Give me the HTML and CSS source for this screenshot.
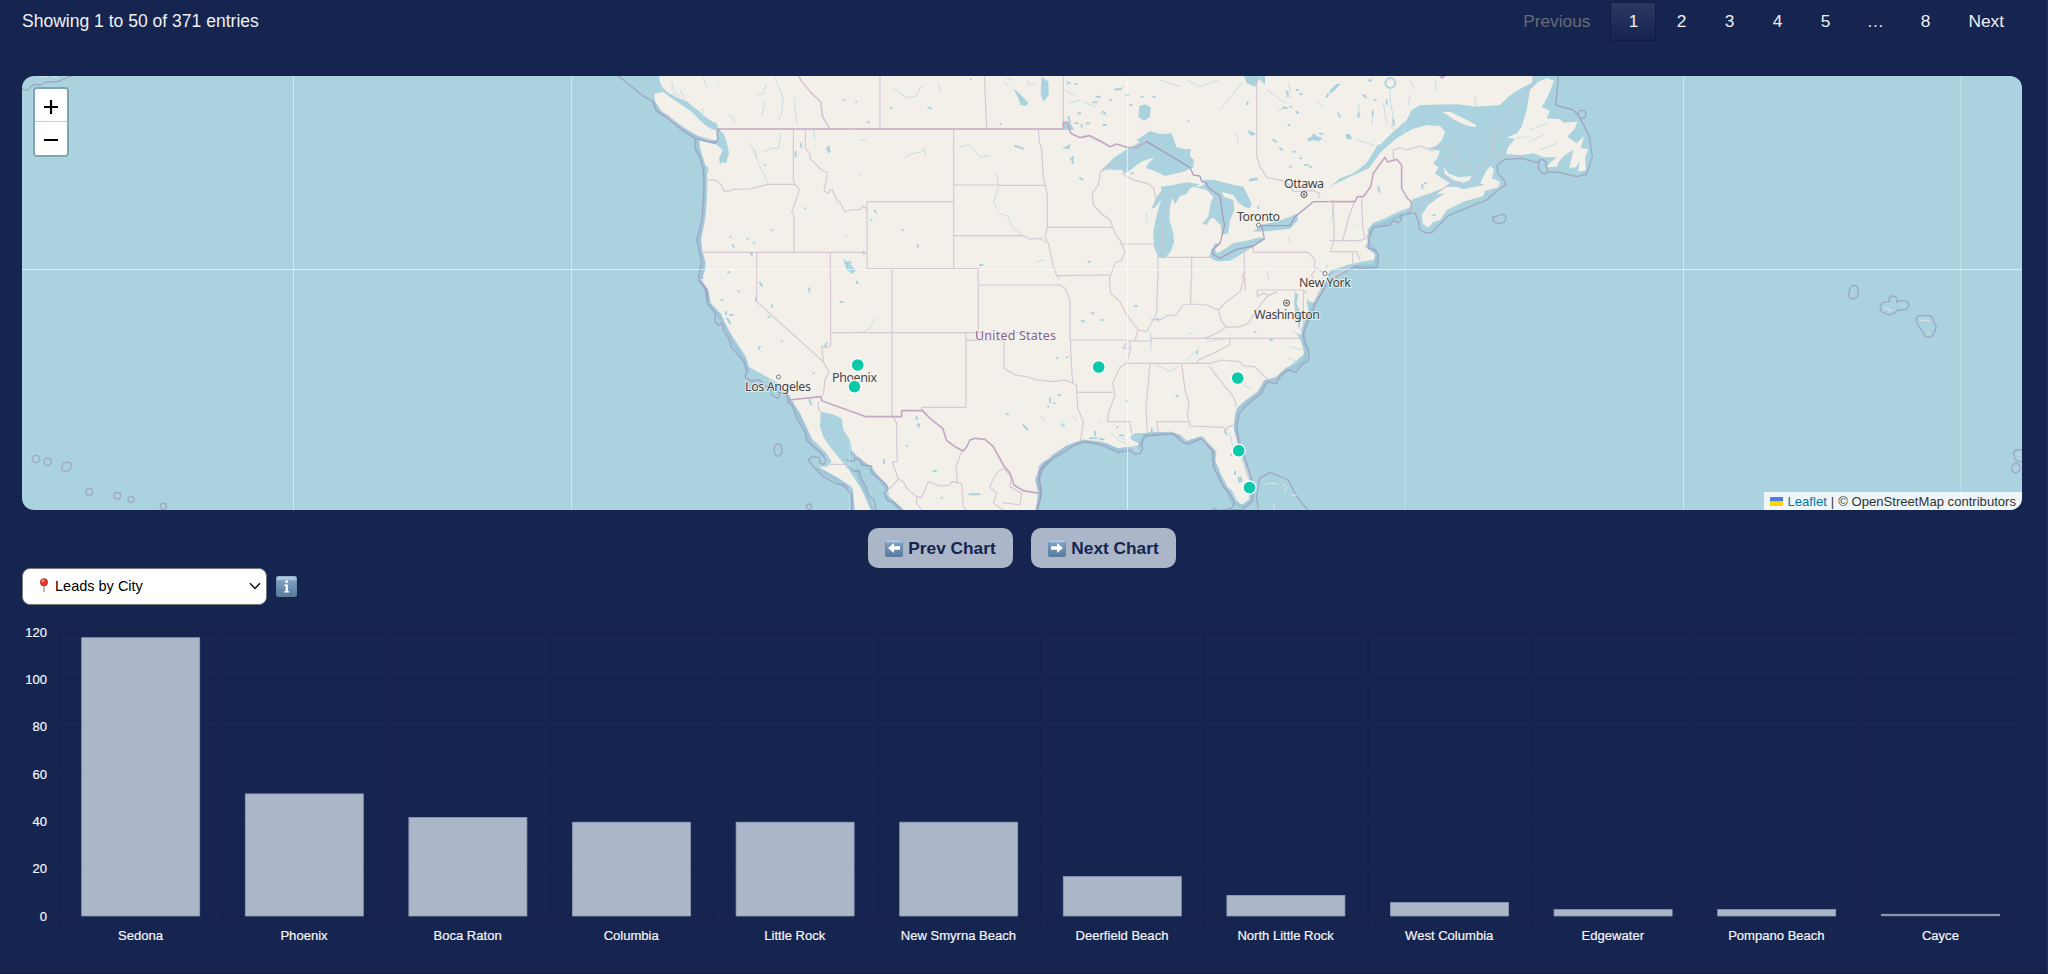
FILE: index.html
```html
<!DOCTYPE html>
<html lang="en">
<head>
<meta charset="utf-8">
<title>Leads</title>
<link rel="stylesheet" href="styles.css">
</head>
<body>
<header class="table-footer">
  <div class="info">Showing 1 to 50 of 371 entries</div>
  <nav class="pager">
    <a class="page word disabled">Previous</a><a class="page current">1</a><a class="page">2</a><a class="page">3</a><a class="page">4</a><a class="page">5</a><span class="page dots">…</span><a class="page">8</a><a class="page word">Next</a>
  </nav>
</header>

<section class="map">
  <svg class="tiles" viewBox="22 76 2000 434">
    <!-- north-west -->
    <g transform="translate(600 70) scale(.33333)">
      <path class="land" d="M178 0L178 30 185 48 200 65 225 80 262 95 285 115 312 138 345 160 356 178 368 188 378 215 386 250 378 272 360 281 357 266 368 240 350 224 298 212 302 240 312 275 320 300 318 330 320 380 316 430 308 480 303 510 306 545 316 575 316 600 308 620 322 650 330 694H1204V0Z"/>
      <path class="land" d="M162 72L190 66 215 85 245 105 275 125 300 150 335 168 352 187 350 210 330 214 300 202 260 180 215 150 185 125 166 95Z"/>
      <path class="shelf" d="M160 98L172 122 205 142 245 174 290 202 345 216M290 210L291 235 306 270 316 310 317 350 314 400 310 455 298 505 302 545 311 575 302 620 317 645 327 690"/>
      <path class="lake" d="M730 566L740 575 755 572 752 585 768 600 758 612 740 600ZM280 112L300 125 320 150 350 160 356 178 340 180 315 165 290 140ZM350 180L370 190 380 215 387 250 378 280 372 278 375 240 360 215ZM681 230L688 225 692 245 685 250Z"/>
      <path class="river" d="M195 70l20 8 8-8 8 18 25 10M215 35l6 25 18 20M240 60l16 30M262 95l0 20 15 5M300 150l10-20-5-15M310 20l10 30M500 40l-10 30-15 5M495 95l-10 45M525 25l25 60-5 45-8 20M583 85l5 60 5 15M385 135l15 10 3 15M350 40l6 10M445 218l20 25 5 20M490 245l25-10 20 0 8-45M460 240l20 50 25 50M880 55l40 28 30-5 10-25 10-5M1015 40l5 28M915 262l15-10 30-5 12-12 5 22M1080 230l25-5 20 18 15 18 28-5M1190 310l5 40-15 50 20 25M640 180l5 25M780 310l5 10M780 210l18 3M730 505l12-8M600 215l5 22"/>
      <path class="dots" d="M615 415h1M391 500h1M398 525l3 5M442 506h1M461 518h1M453 550l3 5M515 481h1M494 286h1M733 90h1M768 95h1M804 157h3M985 112l8 3M873 114h2M824 422l4 5M814 451h1M907 481h2M952 525l2 5M790 547l2 4M770 630l3 10M482 640l6 8M467 686h2M428 633h1M384 607h4M629 655v4M603 222v8M587 245v14M1140 585h8M1112 28h1M240 90l5 5M362 220l6 14M320 290l3 15M680 235l8 10M800 635h1"/>
      <path class="state" d="M580 178V330L585 343 598 358 590 385 575 425 582 437V547M320 328L350 332 365 345 370 362 385 365 400 358 450 357 505 343H582M616 180V235L630 250 630 265 665 300 682 308 678 335 672 362 683 369 696 358 712 392 722 400 735 426 750 420 780 418 790 408 801 418M801 395H1060M801 395V596H1137M1061 180V596M1061 345H1204M1061 497H1204M310 547H801M470 547V690M691 547V690M876 600V690M1134 600V690M1134 645H1204M840 10V175M1153 10L1160 175"/>
      <path class="state strong" d="M595 15L605 35 635 70 662 95 668 140 690 177"/>
      <path class="nation" d="M350 177H1204"/>
      <path class="sea" d="M55 18L130 78 160 95 168 122 205 145 245 180 285 205 345 219 355 208 350 190 358 178M285 205L285 235 300 265 310 300 312 340 309 400 305 450 290 510 298 545 305 575 295 620 312 645 322 690"/>
    </g>

    <!-- Great Lakes -->
    <g transform="translate(1000 70) scale(.33333)">
      <path class="land" d="M-4 0H1054V585L990 602 984 625 965 650 945 694H-4Z"/>
      <path class="lake" d="M985 612L995 600 1054 580V640L1030 694H940L965 650Z"/>
      <path class="land" d="M984 622L1005 606 1054 592V600L1010 616Z"/>
      <path class="lake" d="M302 303L340 265 385 235 420 217 410 210 450 183 480 192 515 190 530 232 555 238 572 236 570 258 582 270 580 292 550 305 495 318 465 303 438 295 446 278 463 262 430 272 410 285 395 298 375 310 365 300 350 300 330 298Z"/>
      <path class="lake" d="M488 372L518 378 510 410 508 450 520 490 522 515 512 545 495 564 475 562 462 530 460 485 470 435Z"/>
      <path class="lake" d="M455 415L465 390 485 360 482 350 520 345 560 337 600 343 570 355 560 372 540 378 525 403 515 377 490 380 465 413Z"/>
      <path class="lake" d="M560 345L600 350 618 340 605 330 640 329 700 345 730 350 755 400 750 415 735 412 715 398 700 375 665 365 672 380 700 390 703 420 690 450 685 490 665 495 662 465 640 443 630 448 620 465 607 460 625 440 632 400 640 380 620 360Z"/>
      <path class="lake" d="M626 562L650 574 690 572 720 555 795 508 780 502 740 512 700 520 670 540 652 550 645 538 658 520 645 520 635 540Z"/>
      <path class="lake" d="M760 485L780 465 830 455 870 440 893 430 893 452 870 476 800 484Z"/>
      <path class="lake" d="M418 108L435 103 452 112 450 140 432 153 415 140ZM40 55L60 72 85 98 78 107 62 105 55 85ZM125 20L145 35 146 75 130 95 122 70ZM730 14H795V45L778 26 765 50 740 40ZM975 85L990 55 1018 40 1020 48 1000 62 985 82ZM188 155L215 165 222 180 190 180ZM186 235L212 222 208 237Z"/>
      <path class="lake" d="M922 205L935 200 940 190 950 198 968 205 955 214 940 210 925 215ZM745 328L770 322 775 330 750 335ZM745 180L755 185 768 190 758 198 746 192Z"/>
      <path class="river" d="M0 430l25 10 10 30 30 25M80 25l5 20 20-5M10 35l15 15M20 25l20 5M865 40l5 20-10 20M835 120l20-5M855 80l20 2M950 95l18 15M960 640l25-60 60-60M1000 370l20-15 30-40M865 500l5 22M345 60l25-8M195 60l30 18M210 100l30-10M250 95l35 15M255 195l40 20M300 130l20 5M200 30l5 20M710 190l5 30M745 95l-5 10M800 600l15 60M480 30l60 20M560 30l40 20 55-20M660 120l40-50 25-30M800 60l60 40M440 430v25M110 575l25-5M1015 250l10 30"/>
      <path class="dots" d="M218 260v20M212 268h6M240 325l8 4M265 576h5M205 140l5 20M235 130h6M280 97h10M310 125l5 5M345 58h18M225 42h4M290 80h10M225 160h8M260 160h8M310 165h8M205 38h4M245 165v5M330 90h3M380 75h4M390 105h5M425 80h3M460 80h5M45 228l25 8M890 60h4M860 65l4 10M850 112l10 2M870 110h3M900 72h5M890 125l4 5M865 165h3M820 210l8 5M840 235l6 5M900 265h4M915 285h8M870 290h3M1035 195l12 5M880 245h5M775 410v4M930 290h4M960 190l8 3M1035 85l3-4M742 98v4M565 153h1M505 205h1M1 162h1M395 310h4"/>
      <path class="state" d="M190 10V158M115 180L118 215 125 240 130 320 142 375V470M-4 346H138M140 472H335M142 472L135 500 145 520 160 590 170 617 200 655 195 670 207 694M-4 497H70L90 507 120 505 138 518M-4 645H190M170 617L330 615M302 305L295 345 277 370 280 405 310 435 330 450 345 490 360 510 375 545 365 570 345 580 330 620 328 655 350 694M360 522H490M302 305L360 270H382L400 232M382 270L368 312 395 328 440 340 460 352 468 385 495 370 518 380 490 440 487 520 485 560M474 560V694M480 562H630M575 562V694M733 538V658H910M760 528V547H925L945 570 942 590 978 612M770 25V260L780 290 800 322 860 335 880 365 940 362 960 370 955 385M1000 395L1003 470 992 510V580M992 512H1050M995 545H1050M735 600L720 640 690 680M945 600L935 615 945 650 920 694M770 658V680L790 672 810 680 820 665 840 685M910 658V690"/>
      <path class="nation" d="M-4 177H190V157H203L212 190 240 203 270 197 300 212 330 230 350 222 382 232 408 233 440 215"/>
      <path class="sea deep" d="M440 215L570 292 580 315 600 318 605 335 620 340 625 353 660 378 667 430 674 467 660 520 637 540 638 552 658 565 710 538 760 528 793 506 785 467H870L885 440 940 395H1050"/>
    </g>

    <!-- Atlantic Canada -->
    <g transform="translate(1330 70) scale(.33333)">
      <path class="land" d="M-4 0H610L606 38 560 62 535 80 510 105 440 110 380 103 270 105 245 120 230 150 185 190 150 225 110 285 60 315 115 292 150 248 200 205 245 178 290 165 330 168 346 185 335 212 318 228 296 235 330 243 322 265 310 280 326 292 315 310 335 325 362 340 345 352 300 370 248 388 240 412 205 425 160 447 130 458 112 480 120 505 105 530 138 555 132 570 110 572 60 583 -4 602Z"/>
      <path class="lake" d="M-4 355L30 325 75 308 110 278 145 222 160 235 118 294 60 320 10 345Z"/>
      <path class="land" d="M275 435L295 405 322 385 345 370 320 374 340 352 380 350 400 358 445 348 465 345 450 340 470 300 482 288 492 300 485 325 510 335 505 352 465 362 460 378 400 395 350 420 330 450 310 455 295 473 278 460ZM340 290L355 310 385 322 425 318 420 330 400 338 370 330 345 312ZM337 125L362 126 400 145 440 166 435 172 405 165 370 148Z"/>
      <path class="land" d="M600 60L625 35 650 24 672 32 655 75 645 95 635 112 660 122 650 145 690 148 700 158 742 155 735 175 712 200 740 220 762 198 752 235 775 238 765 262 768 300 745 306 748 275 738 292 718 294 730 240 705 255 690 270 680 290 650 292 660 278 682 262 640 262 610 250 570 256 528 252 535 230 555 207 530 203 560 190 575 170 590 120Z"/>
      <path class="lake" d="M0 60l20-18 12 0-20 20L0 72ZM48 192l10 0 8 10-6 8-12-6Z"/>
      <path class="ring" d="M181 24a15 15 0 1 0 .1 0"/>
      <path class="river" d="M125 20l5 10M180 60l0 30 10 50-5 30 10 10M160 100l10 60M95 70l15 15M85 100l5 45M240 30l12 20M315 30l5 30M435 80l3 30M80 210l50 15M130 120l-5 45M240 75l-5 30M270 170l15-10M290 230l15 15 25-15M440 255l-10 18M448 252v14M145 350l3 20M80 465l5 3M600 180l50-20M600 215l40-20M630 240l50-20M560 205l30-5M50 525h2M10 396l-5 60"/>
      <path class="dots" d="M100 75l8 8M135 90h3M128 125v10M170 90v12M190 150l2 15M25 130l4 10M85 130v10M285 340h3M310 435h4M277 345v10M145 350l3 15M115 30l8 2"/>
      <path class="state" d="M190 265V240L210 233 230 240 270 228 300 240 345 222M95 385L98 470 105 508M76 390L60 430 38 510M8 395L12 455V510L2 545M0 512H90L105 505M0 545H80L90 570M68 550V580M610 10V36L560 105 487 190V247L450 297H420L390 275 370 235 345 222M450 297L435 325 405 348 370 342 335 315V280L380 255M487 247L525 268M362 340L320 370 280 395 260 425 245 430"/>
      <path class="shelf" d="M235 430L205 440 160 462 130 470 115 500 120 525 140 550 135 590 85 590 0 615"/>
      <path class="nation" d="M0 395H75L82 380H100L122 350 130 310 165 262 172 276 200 268 215 285V355L232 385 244 395V415L235 430M328 16l8 8 10-8"/>
      <path class="sea" d="M235 430L210 437 213 450 205 458 190 452 180 465 130 473 117 500 115 535 135 540 145 555 143 592 90 595 78 588 0 630M235 430H256L265 455 270 480 285 488H305L355 437 400 418 470 390 500 363 527 345 522 330 503 310 502 285 525 268 575 265 620 277 635 268 645 272 653 305 690 308 740 320 770 312 787 260 778 200 748 140 730 120 677 105 682 60 685 10M744 133a12 12 0 1 0 24 0a12 12 0 1 0-24 0M627 275l-2 18 8 14 12 5 10-7M488 440l10 0 10-5 12-2 8 7-3 14-12 7-18-3-6-8Z"/>
    </g>

    <!-- south-west and Mexico -->
    <g transform="translate(650 280) scale(.33333)">
      <path class="land" d="M148 -4L175 30 180 70 212 100 235 150 255 180 285 225 298 262 350 290 385 310 412 338 430 370 450 400 470 440 485 475 530 520 545 545 530 560 500 560 560 590 605 620 615 694H665L650 655 630 620 600 575 580 550 540 500 520 470 510 440 512 395 545 402 575 415 580 450 600 480 605 510 620 530 660 560 690 595 715 620 705 640 730 660 765 694H1158L1165 640 1155 600 1168 565 1180 545 1204 535V-4Z"/>
      <path class="shelf" d="M150 0L170 35 177 70 205 105 230 150 250 190 280 235 293 275M410 345L428 375 448 410 466 450 482 490 520 525M505 565L560 600 605 630 608 690M605 520L660 565 708 620 712 655 755 690M620 570L650 650 668 690M1162 690L1170 640 1163 600 1180 560"/>
      <path class="dots" d="M330 8l6 10M214 60h3M318 55v8M366 76v4M355 110h4M265 34h2M330 200l-4 5M395 183h1M478 25v10M572 66h6M620 5l2 4M232 115l8 15M228 95v8M240 105h8M478 360l6 14M490 280h1M800 410v8M806 432v8M802 436h6M770 497h1M850 573h8M958 643h30M702 540v10M875 653h1M1070 403h4M1120 435l12 14M1175 320v12M1190 380v6M1175 57h2M530 190l-5 8M560 495l12 12"/>
      <path class="river" d="M640 155l20-10 15-30M560 490l15 25"/>
      <path class="state" d="M320 -2V65L520 245L537 278 525 298 520 345M542 -2V195L530 203 515 200 520 245M542 158H1204M726 -2V410M985 -2V158M985 15H1204M948 158V382H815V392M948 181H1062V265L1095 285 1130 290 1170 303 1204 300M730 412L740 430V500L742 545 727 547 745 597 720 625M745 597L760 605 770 625 800 650 815 652 835 605 870 618 900 615 905 605 935 610 940 680 950 690M935 515L918 560 922 605M800 655V670L815 690M540 553H590M505 365V385L512 395M1060 565L1040 580 1018 620 1040 640 1030 670 1060 690M1060 565L1085 590 1080 620 1115 640 1110 675 1060 668"/>
      <path class="nation" d="M415 360L513 350 515 362 648 410H755V392H818L840 415 878 445 890 482 915 500 940 513 950 500 960 480 975 475 1005 478 1030 500 1060 555 1080 580 1092 615 1120 632 1168 640"/>
      <path class="sea" d="M145 0L170 28 172 70 197 100 195 125 205 135 217 132 220 150 238 180 243 200 285 250 290 275 285 290 300 303 330 300 345 318 362 325 365 345 385 355 390 340 375 330 412 345 415 368 428 378 440 415 465 455 470 482 515 520 528 540 522 553 510 550 508 532 485 530 475 540 490 560 520 590 560 612 580 615 605 645V690M590 540L612 545 615 535 630 540 635 555 665 558 665 580 705 610 715 625 703 640 710 660 735 670 752 690M597 560L612 575 628 572 630 590 648 620 655 645 672 660 678 690M372 510a11 17 0 1 0 24 0a11 17 0 1 0-24 0M469 680a8 8 0 1 0 16 0a8 8 0 1 0-16 0M1160 690L1175 640 1165 610 1175 570 1204 540"/>
    </g>

    <!-- south-east -->
    <g transform="translate(1040 280) scale(.33333)">
      <path class="land" d="M-4 -4H860L845 30 825 70 812 65 797 45 805 90 792 130 785 165 770 160 785 190 792 222 760 250 735 268 705 295 675 300 655 335 620 360 595 380 585 410 582 450 595 490 612 540 628 580 632 625 630 660 605 675 590 660 575 630 560 620 540 580 525 540 530 515 500 490 480 470 450 480 435 485 420 465 395 458 350 455 330 455 320 460 285 460 270 470 275 480 298 490 290 510 260 500 235 505 200 490 130 480 85 495 45 520 -4 550Z"/>
      <path class="shelf" d="M855 10L822 75 788 150 800 215 795 240 768 262 740 268 712 295 675 306 655 340 618 366 592 392 586 440 597 490 612 540 632 600 632 660 608 680 580 668 545 600 522 550 518 510 485 473 440 488 420 470 390 460 310 466 298 500 270 506 235 512 185 490 130 484 80 502 0 560"/>
      <path class="lake" d="M765 35L775 45 770 70 785 110 778 150 768 110 762 70ZM592 590L605 590 608 605 595 608ZM285 460L310 465 295 490 275 475Z"/>
      <path class="river" d="M330 155l5 30-3 25M440 165l20-8M480 200l-40 40M350 255l40 20 25-15M610 315l25 12M755 150l25 15M750 200l35 10M745 235l25 10M570 460l10 50M210 455l25 25 30 15M60 435l15-10M95 405l15 15M180 420l6 10M500 185l60-10M520 280l15 15M0 405l15 20M235 470l20 10"/>
      <path class="dots" d="M285 78h5M155 100h6M125 122l8 3M185 120h3M410 348h3M350 118h5M470 220l3-6M645 155h2M690 180h6M50 235h2M80 232h2M30 355v12M42 370h2M24 380h2M55 345h6M68 435l4 3M165 455v10M150 475h20M180 478h10M335 445v15M555 455l5 8M535 565l-4 8M573 525h1M585 575v8M550 600l5 10M232 440v2M260 362h2M240 465l10 2"/>
      <path class="state" d="M-4 15H60L75 25 90 60V180H260L270 183H333V175H495M92 180V215L98 310M-4 300L40 305 75 300 110 315V337H217M110 337L113 385 130 425 122 478M208 -4L212 40 240 65 257 100 295 150 285 180 270 185 272 205H248L260 190M272 205L260 250 240 262 218 310 225 345 205 400 202 425H270L275 460M295 150L320 155 350 100 353 -4M335 118L360 120 385 105 405 108 430 75 452 72 500 75 535 90M453 -4L452 72M535 90L560 65 600 35 612 -4M535 90L545 125 560 142 600 140 625 130 650 90 680 50 710 35 690 45 670 40 652 50V30H790V130M560 140L530 160 495 175H785M570 178L568 195 520 220 475 240 470 250H260M470 250H510L545 240 600 245 610 258 645 260 685 300M508 260L540 300 555 320 580 350 590 378M330 250L318 380 322 458M425 250L435 330 447 370 442 405 450 438 552 442 556 455 565 440 580 437M442 425H350L355 455M790 30L800 40M615 -4V28"/>
      <path class="sea" d="M860 15L825 70 820 90 790 160 793 185 808 215 805 243 790 250 768 277 745 270 720 288 710 310 680 307 665 340 620 375 598 400 590 440 597 490 612 520 618 545 635 600 640 660 610 688 570 690M-4 572L25 543 80 512 110 490 140 485 185 495 235 518 270 512 285 523 300 520 308 505 305 490 315 468 400 460 425 485 445 493 485 475 520 515 520 560 550 620 565 635 583 665 578 682 560 688 535 692 525 685 515 692M655 692L650 650 658 595 690 577 745 600 770 650 805 692M-4 575L-4 590 3 620 3 650 -10 690"/>
      <path class="isle faint" d="M677 612l20-3 14 3M728 612l12 10-5 18M757 645h10M703 672v20"/>
    </g>

    <!-- Azores, Hawaii and other islands -->
    <g transform="translate(1700 260) scale(.33333)">
      <path class="sea" d="M455 78l12-2 8 12-2 20-12 10-12-4-3-12 4-16ZM540 138l8-10 22-4-4-8 8-8 12 2 6 10-2 6 16-4 16 2 5 12-8 12-12 2-14 0-10 10-18 4-20-8ZM655 167l30-1 10 4 14 32-10 24-12 6-10-2-26-40-2-16ZM965 569l-20 1-5 12 8 20 18 4M935 622l6-10 12-2 8 8-2 14-12 7-10-5Z"/>
      <path class="isle faint" d="M553 144l22 8M604 135l8 3M660 180l26 2M955 580v6M686 218h2M458 102h1"/>
    </g>
    <g transform="translate(0 430) scale(.33333)">
      <path class="sea" d="M97 87a11 11 0 1 0 22 0a11 11 0 1 0-22 0M132 95a11 11 0 1 0 22 0a11 11 0 1 0-22 0M185 112l3-10 10-6 12 2 4 8-5 14-12 4-10-4ZM258 185a10 10 0 1 0 20 0a10 10 0 1 0-20 0M342 197a10 10 0 1 0 20 0a10 10 0 1 0-20 0M384 208a9 9 0 1 0 18 0a9 9 0 1 0-18 0M481 229a9 9 0 1 0 18 0a9 9 0 1 0-18 0"/>
    </g>
    <path class="sea" transform="scale(.33333)" d="M66 266L76 271 86 268 98 255 112 253 120 255 140 246 150 244 160 247 178 243 200 234 214 228"/>
    <path class="isle faint" transform="scale(.33333)" d="M120 231l20-2M160 231h10"/>

    <!-- tile seams -->
    <path class="seam" d="M293.5 76V510M571.5 76V510M1683.500 76V510"/>
    <path class="seam soft" d="M849.500 76V510M1405 76V510M1960.500 76V510"/>
    <path class="seam bold" d="M1127.500 76V510M22 269.500H2022"/>

    <g class="places">
      <text x="1284" y="188" textLength="40">Ottawa</text>
      <text x="1237" y="221" textLength="43">Toronto</text>
      <text x="1299" y="287" textLength="52">New York</text>
      <text x="1254" y="318.500" textLength="66">Washington</text>
      <text x="745" y="391" textLength="66">Los Angeles</text>
      <text x="832" y="382" textLength="45">Phoenix</text>
      <text class="country" x="975" y="340" textLength="81">United States</text>
    </g>
    <g class="towns">
      <circle cx="1304" cy="194.500" r="3"/><circle cx="1304" cy="194.500" r=".8"/>
      <circle cx="1286.500" cy="303" r="3"/><circle cx="1286.500" cy="303" r=".8"/>
      <circle class="minor" cx="1258.500" cy="225" r="2"/><circle class="minor" cx="1325" cy="273.500" r="2"/><circle class="minor" cx="778.500" cy="377" r="2"/>
    </g>
    <g class="markers">
      <circle cx="857.700" cy="365" r="6.500"/><circle cx="854.500" cy="386.700" r="6.500"/><circle cx="1098.700" cy="367" r="6.500"/><circle cx="1237.700" cy="378" r="6.500"/><circle cx="1238.700" cy="450.700" r="6.500"/><circle cx="1249.500" cy="487.500" r="6.500"/>
    </g>
  </svg>
  <div class="zoom">
    <button class="zoom-btn" aria-label="Zoom in"><svg width="14" height="14"><path d="M0 7H14M7 0V14"/></svg></button>
    <button class="zoom-btn" aria-label="Zoom out"><svg width="14" height="14"><path d="M0 7H14"/></svg></button>
  </div>
  <div class="credit">
    <svg width="13" height="9"><path fill="#4c7be1" d="M0 0h13v4.500H0z"/><path fill="#ffd500" d="M0 4.500h13V9H0z"/></svg>
    <a>Leaflet</a><span>|</span><span>© OpenStreetMap contributors</span>
  </div>
</section>

<div class="chart-nav">
  <button class="nav-btn"><svg class="key" viewBox="0 0 18 18"><use href="#tile"/><path fill="#fff" d="M3 9L9 4V7.200H15V10.800H9V14Z"/></svg><span>Prev Chart</span></button>
  <button class="nav-btn"><svg class="key" viewBox="0 0 18 18"><use href="#tile"/><path fill="#fff" d="M15 9L9 4V7.200H3V10.800H9V14Z"/></svg><span>Next Chart</span></button>
</div>

<div class="chart-pick">
  <div class="select">
    <svg class="pin" width="10" height="15"><path d="M5 6V14" stroke="#8d8d8d" stroke-width="1.200"/><circle cx="5" cy="4.200" r="4" fill="#dc3530"/><circle cx="4" cy="2.800" r="1.300" fill="#f79a94"/></svg>
    <span class="choice">Leads by City</span>
    <svg class="chevron" width="12" height="8"><path d="M1 1.300L6 6.500 11 1.300"/></svg>
  </div>
  <svg class="info-key" viewBox="0 0 18 18">
    <defs>
      <linearGradient id="steel" x2="0" y2="1"><stop offset="0" stop-color="#b9d3ea"/><stop offset=".16" stop-color="#a5c2dc"/><stop offset=".24" stop-color="#7c9fc0"/><stop offset="1" stop-color="#57799a"/></linearGradient>
      <g id="tile"><rect width="18" height="18" rx="2.500" fill="url(#steel)"/><rect x=".4" y=".4" width="17.200" height="17.200" rx="2.200" fill="none" stroke="#5d7f9f" stroke-width=".6" opacity=".6"/></g>
    </defs>
    <use href="#tile"/><path fill="#fff" d="M8 3.800h2.200v2H8zM7 7.200h3.200v5.800h1v1.200H7V13h1.200V8.400H7z"/>
  </svg>
</div>

<svg class="chart" viewBox="22 610 2000 360">
  <path class="grid" d="M51 632.500H2022M51 679.800H2022M51 727H2022M51 774.300H2022M51 821.500H2022M51 868.800H2022M222.500 632V925M386.500 632V925M550 632V925M713.500 632V925M877 632V925M1040.500 632V925M1204 632V925M1368 632V925M1531.500 632V925M1695 632V925M1858.500 632V925M2021.500 632V925"/>
  <path class="grid axis" d="M59.500 632V925M51 916.500H2022"/>
  <g class="bars">
    <rect x="81.700" y="637.700" width="118" height="278.300"/><rect x="245.300" y="793.900" width="118" height="122.100"/><rect x="408.900" y="817.500" width="118" height="98.500"/><rect x="572.500" y="822.200" width="118" height="93.800"/><rect x="736.100" y="822.200" width="118" height="93.800"/><rect x="899.700" y="822.200" width="118" height="93.800"/><rect x="1063.300" y="876.600" width="118" height="39.400"/><rect x="1226.900" y="895.400" width="118" height="20.600"/><rect x="1390.500" y="902.500" width="118" height="13.500"/><rect x="1554.100" y="909.600" width="118" height="6.400"/><rect x="1717.700" y="909.600" width="118" height="6.400"/><rect x="1881.600" y="914.300" width="118" height="1.500"/>
  </g>
  <g class="ticks y">
    <text x="47" y="636.700">120</text><text x="47" y="684">100</text><text x="47" y="731.300">80</text><text x="47" y="778.500">60</text><text x="47" y="825.800">40</text><text x="47" y="873">20</text><text x="47" y="920.500">0</text>
  </g>
  <g class="ticks x">
    <text x="140.500" y="940">Sedona</text><text x="304" y="940">Phoenix</text><text x="467.600" y="940">Boca Raton</text><text x="631.200" y="940">Columbia</text><text x="794.800" y="940">Little Rock</text><text x="958.400" y="940">New Smyrna Beach</text><text x="1122" y="940">Deerfield Beach</text><text x="1285.600" y="940">North Little Rock</text><text x="1449.200" y="940">West Columbia</text><text x="1612.800" y="940">Edgewater</text><text x="1776.400" y="940">Pompano Beach</text><text x="1940.400" y="940">Cayce</text>
  </g>
</svg>
</body>
</html>
```

FILE: styles.css
```css
* { box-sizing: border-box; }
body {
  margin: 0;
  padding: 0 25px 0 22px;
  height: 974px;
  overflow: hidden;
  background: #152550;
  color: #f0f0f2;
  font-family: "Liberation Sans", Arial, sans-serif;
  border-right: 1px solid #26355d;
  border-bottom: 1px solid #0f1c40;
}
button { font: inherit; border: 0; padding: 0; }

.table-footer { display: flex; justify-content: space-between; height: 76px; padding-top: 2px; }
.info { font-size: 17.55px; line-height: 38px; }
.pager { display: flex; gap: 2px; height: 39px; }
.page {
  width: 46px;
  font-size: 17.3px;
  line-height: 36px;
  text-align: center;
  border: 1px solid transparent;
}
.page.word { width: auto; padding: 0 17px; }
.page.disabled { color: #666b77; }
.page.current { background: linear-gradient(#2a3860, #152350); border-color: #101d43; }
.page.dots { width: 50px; }

.map { position: relative; height: 434px; border-radius: 12px; overflow: hidden; background: #aad3df; }
.tiles { display: block; width: 2000px; height: 434px; }
.tiles path { fill: none; stroke-linejoin: round; stroke-linecap: round; }
.tiles .land { fill: #f3efe9; }
.tiles .lake { fill: #aad3df; }
.tiles .shelf { stroke: #93b9d2; stroke-width: 11; opacity: .5; }
.tiles .river { stroke: #aad3df; stroke-width: 2.5; opacity: .7; }
.tiles .ring { stroke: #aad3df; stroke-width: 5; }
.tiles .dots { stroke: #aad3df; stroke-width: 6; }
.tiles .isle { stroke: #ecdfe0; stroke-width: 4; }
.tiles .faint { opacity: .7; }
.tiles .state { stroke: #cdbfd0; stroke-width: 3.4; opacity: .8; }
.tiles .strong { stroke: #c8b0c9; stroke-width: 4; }
.tiles .nation { stroke: #c3a9c4; stroke-width: 5; }
.tiles .sea { stroke: #9f9fc0; stroke-width: 4; opacity: .85; }
.tiles .deep { stroke: #a592b8; }
.tiles .seam { stroke: #e6f5f6; stroke-width: 1; opacity: .65; }
.tiles .soft { opacity: .35; }
.tiles .bold { stroke: #fff; opacity: .6; }
.places { font-family: "Noto Sans", sans-serif; font-size: 12.5px; fill: #444; }
.places text { paint-order: stroke; stroke: #f7f5f1; stroke-width: 2px; stroke-opacity: .75; }
.places .country { fill: #83628c; }
.towns { fill: none; stroke: #555; stroke-width: 1; }
.towns .minor { fill: #fff; stroke: #777; }
.markers { fill: #0bc9a9; stroke: #fff; stroke-width: 1.3; }

.zoom {
  position: absolute;
  top: 11px;
  left: 11px;
  width: 36px;
  border: 2px solid rgba(70, 105, 115, .42);
  border-radius: 4px;
  background-clip: padding-box;
}
.zoom-btn { display: grid; place-items: center; width: 32px; height: 33px; padding-top: 2px; background: #fff; border-radius: 0 0 2px 2px; }
.zoom-btn:first-child { height: 33px; padding-top: 4px; border-bottom: 1px solid #ccc; border-radius: 2px 2px 0 0; }
.zoom-btn path { stroke: #000; stroke-width: 2.2; fill: none; }
.credit {
  position: absolute;
  right: 0;
  bottom: 0;
  display: flex;
  align-items: center;
  gap: 4px;
  height: 18px;
  padding: 0 6px;
  background: rgba(255, 255, 255, .8);
  color: #333;
  font-size: 13.1px;
  white-space: nowrap;
}
.credit a { color: #0078a8; }

.chart-nav { display: flex; justify-content: center; gap: 18px; padding-top: 18px; }
.nav-btn {
  display: flex;
  align-items: center;
  justify-content: center;
  gap: 5px;
  width: 145px;
  height: 40px;
  border-radius: 10px;
  background: #abb6c8;
  color: #152550;
  font-size: 17.3px;
  font-weight: bold;
  white-space: nowrap;
}
.key { width: 18px; height: 18px; }

.chart-pick { display: flex; align-items: center; gap: 9px; height: 37px; }
.select {
  display: flex;
  align-items: center;
  width: 245px;
  height: 37px;
  padding: 0 5px 2px 16px;
  border: 1px solid #777;
  border-radius: 8px;
  background: #fff;
  color: #000;
  font-size: 14.5px;
}
.choice { flex: 1; margin-left: 6px; }
.chevron path { fill: none; stroke: #111; stroke-width: 1.5; }
.info-key { width: 21px; height: 21px; }

.chart { display: block; width: 2000px; height: 360px; margin-top: 5px; }
.grid { fill: none; stroke: #122047; stroke-width: 1; opacity: .6; }
.axis { opacity: 1; }
.bars rect { fill: #abb6c8; stroke: #8f9cb5; stroke-width: .8; }
.ticks { fill: #f5f5f7; stroke: #f5f5f7; stroke-width: .2; font-size: 13.05px; }
.ticks.y { text-anchor: end; }
.ticks.x { text-anchor: middle; }
```
